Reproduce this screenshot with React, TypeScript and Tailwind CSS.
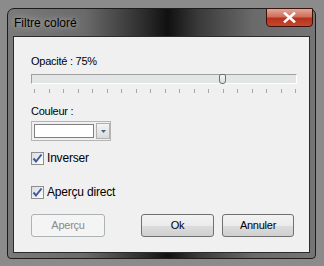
import React from 'react';

const ticks = Array.from({ length: 19 }, (_, i) => i);

const Check: React.FC = () => (
  <span className="w-[13px] h-[13px] border border-[#8e8f8f] bg-[linear-gradient(135deg,#dcdcdc,#ffffff)] flex items-center justify-center">
    <svg width="11" height="11" viewBox="0 0 11 11">
      <path d="M1.5 5.5 L4 8.5 L9.5 1.5" fill="none" stroke="#3d5a9e" strokeWidth="2" />
    </svg>
  </span>
);

const App: React.FC = () => {
  return (
    <div
      className="w-[324px] h-[266px] overflow-hidden bg-[#8b8b8b] pt-[8px] pl-[7px]"
      style={{ fontFamily: '"Liberation Sans", Arial, sans-serif' }}
    >
      <div className="relative w-[309px] h-[251px] rounded-t-[7px] rounded-b-[4px] border border-[#1c1c1c] bg-[linear-gradient(90deg,#7a7a7a_0%,#6a6a6a_25%,#2a2a2a_45%,#101010_52%,#3a3a3a_62%,#6a6a6a_80%,#757575_100%)] flex flex-col">
        {/* title bar */}
        <div className="h-[27px] flex items-center pl-[6px]">
          <span className="text-[12px] text-black [text-shadow:0_0_6px_rgba(255,255,255,0.7)]">Filtre coloré</span>
        </div>
        <button className="absolute top-[-1px] right-[2px] w-[47px] h-[19px] rounded-b-[4px] border border-[#3a120a] bg-[linear-gradient(180deg,#e2a79a_0%,#d0705c_45%,#b8321b_55%,#c5472e_100%)] flex items-center justify-center">
          <svg width="13" height="11" viewBox="0 0 13 11">
            <path d="M2 1.5 L11 9.5 M11 1.5 L2 9.5" stroke="#ffffff" strokeWidth="2.6" strokeLinecap="square" />
          </svg>
        </button>

        {/* client area */}
        <div className="mx-[5px] mb-[5px] flex-1 border border-[#2c2c2c] bg-[linear-gradient(180deg,#4b4b4b,#262626)]">
          <div className="h-full bg-[#f0f0f0] flex flex-col pl-[17px] pr-[15px] pt-[18px] text-[11px] tracking-[-0.25px] text-black">
            <div className="h-[13px] leading-[13px]">Opacité : 75%</div>

            <div className="relative mt-[6px] h-[10px] w-[266px] border-t border-l border-[#a0a0a0] border-b border-r border-b-[#ffffff] border-r-[#ffffff] bg-[#e3e6e6]">
              <div className="absolute left-[187px] top-[-1px] w-[7px] h-[10px] rounded-t-[2px] rounded-b-[3px] border border-[#6f6f6f] bg-[linear-gradient(180deg,#f6f6f6,#dcdcdc)]" />
            </div>

            <div className="relative mt-[5px] h-[4px] w-[266px]">
              {ticks.map((i) => (
                <span
                  key={i}
                  className="absolute top-0 w-[1px] h-[4px] bg-[#a8a8a8]"
                  style={{ left: `${3 + Math.round(i * 14.5)}px` }}
                />
              ))}
            </div>

            <div className="mt-[12px] h-[13px] leading-[13px]">Couleur :</div>

            <div className="mt-[3px] w-[80px] h-[20px] border border-[#b4b4b4] bg-[#f0f0f0] flex items-center pl-[2px] gap-[2px]">
              <span className="w-[60px] h-[14px] border border-[#7f7f7f] bg-white" />
              <span className="w-[14px] h-[16px] border border-[#b0b0b0] bg-[linear-gradient(180deg,#f4f4f4,#dadada)] flex items-center justify-center">
                <svg width="5" height="3" viewBox="0 0 5 3">
                  <path d="M0 0 L5 0 L2.5 3 Z" fill="#4d6185" />
                </svg>
              </span>
            </div>

            <label className="mt-[11px] h-[13px] flex items-center gap-[3px]">
              <Check />
              <span className="text-[12px] tracking-[-0.2px] leading-[13px]">Inverser</span>
            </label>

            <label className="mt-[21px] h-[13px] flex items-center gap-[3px]">
              <Check />
              <span className="text-[12px] tracking-[-0.2px] leading-[13px]">Aperçu direct</span>
            </label>

            <div className="mt-[15px] flex items-center">
              <button className="w-[74px] h-[23px] rounded-[3px] border border-[#adb2b5] bg-[#f4f4f4] text-[#8a8a8a] text-[11px]">
                Aperçu
              </button>
              <div className="flex-1" />
              <button className="w-[73px] h-[23px] rounded-[3px] border border-[#707070] bg-[linear-gradient(180deg,#f2f2f2_0%,#ebebeb_50%,#dddddd_51%,#cfcfcf_100%)] text-black text-[11px]">
                Ok
              </button>
              <button className="ml-[8px] w-[72px] h-[23px] rounded-[3px] border border-[#707070] bg-[linear-gradient(180deg,#f2f2f2_0%,#ebebeb_50%,#dddddd_51%,#cfcfcf_100%)] text-black text-[11px]">
                Annuler
              </button>
            </div>
          </div>
        </div>
      </div>
    </div>
  );
};

export default App;
